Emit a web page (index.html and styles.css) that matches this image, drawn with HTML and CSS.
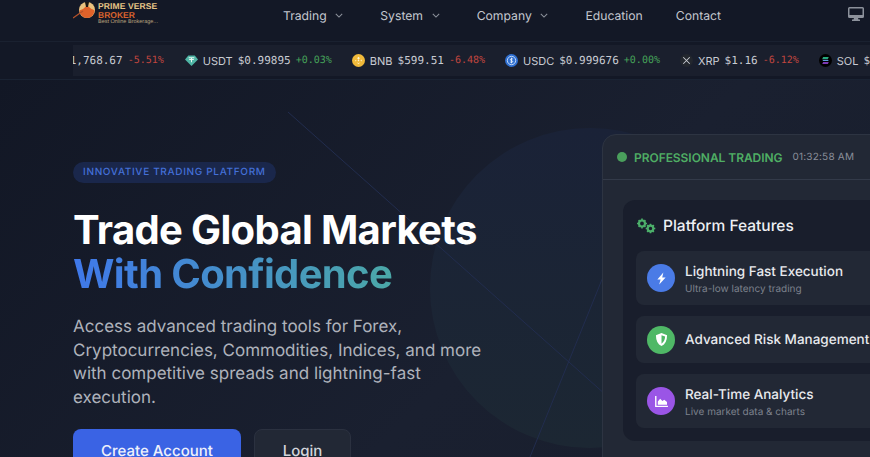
FILE: index.html
```html
<!DOCTYPE html>
<html lang="en">
<head>
<meta charset="utf-8">
<title>Prime Verse Broker</title>
<link rel="stylesheet" href="styles.css">
</head>
<body>
<header class="topbar">
  <a class="logo">
    <svg class="logo-mark" viewBox="0 0 25 26" width="25" height="26">
      <circle cx="14" cy="9" r="8" fill="#e9c27f"/>
      <path d="M6.500 9.500a7.500 7.500 0 0 0 15 0 7 7 0 0 0-3-1.500L14 4.500 10 8z" fill="#e0622a"/>
      <path d="M12 1h4l-1 5h-2z" fill="#1a1712"/>
      <path d="M0 17L10 10" stroke="#b5522a" stroke-width="1.200"/>
    </svg>
    <span class="logo-text">
      <span class="logo-prime">PRIME VERSE</span>
      <span class="logo-broker">BROKER</span>
      <span class="logo-tag">Best Online Brokerage...</span>
    </span>
  </a>
  <nav class="nav">
    <a class="nav-link caret">Trading<svg viewBox="0 0 10 6" width="8" height="5"><path d="M1 1l4 4 4-4" fill="none" stroke="currentColor" stroke-width="1.300"/></svg></a>
    <a class="nav-link caret">System<svg viewBox="0 0 10 6" width="8" height="5"><path d="M1 1l4 4 4-4" fill="none" stroke="currentColor" stroke-width="1.300"/></svg></a>
    <a class="nav-link caret">Company<svg viewBox="0 0 10 6" width="8" height="5"><path d="M1 1l4 4 4-4" fill="none" stroke="currentColor" stroke-width="1.300"/></svg></a>
    <a class="nav-link">Education</a>
    <a class="nav-link">Contact</a>
  </nav>
  <svg class="monitor" viewBox="0 0 16 14" width="16" height="14"><path fill-rule="evenodd" d="M1.500 0h13A1.500 1.500 0 0 1 16 1.500v8a1.500 1.500 0 0 1-1.500 1.500h-13A1.500 1.500 0 0 1 0 9.500v-8A1.500 1.500 0 0 1 1.500 0zM1.500 1.500v6.500h13V1.500zM6 11h4l.5 1.500H12V14H4v-1.500h1.500z" fill="#8c919b"/></svg>
</header>

<section class="ticker">
  <div class="ticker-window">
    <div class="ticker-track">
      <div class="tick tick-first"><span class="sym">BTC</span><span class="price">$71,768.67</span><span class="chg down">-5.51%</span></div>
      <div class="tick">
        <svg class="coin" viewBox="0 0 14 14"><path d="M3.500 1.500h7L14 6l-7 7-7-7z" fill="#4fb5a5"/><path d="M4 4h6M7 4v5M4.500 6h5" stroke="#e8f7f3" stroke-width="1.100" fill="none"/></svg>
        <span class="sym">USDT</span><span class="price">$0.99895</span><span class="chg up">+0.03%</span></div>
      <div class="tick">
        <svg class="coin" viewBox="0 0 14 14"><circle cx="7" cy="7" r="7" fill="#f0b93a"/><path d="M7 3l1.500 1.500L7 6 5.500 4.500zM3.500 6.500L5 7 3.500 8zM10.500 6L9 7l1.500 1zM7 6l1 1-1 1-1-1zM5 9l2 2 2-2-2 1z" fill="#fff4d0"/></svg>
        <span class="sym">BNB</span><span class="price">$599.51</span><span class="chg down">-6.48%</span></div>
      <div class="tick">
        <svg class="coin" viewBox="0 0 14 14"><circle cx="7" cy="7" r="7" fill="#2f6fd0"/><circle cx="7" cy="7" r="4.500" fill="none" stroke="#dbe8fb" stroke-width=".9"/><path d="M8.500 5.500C8 5 6 4.800 5.800 6s2.600 1 2.500 2.200S6 9 5.500 8.500M7 4v6" fill="none" stroke="#fff" stroke-width=".8"/></svg>
        <span class="sym">USDC</span><span class="price">$0.999676</span><span class="chg up">+0.00%</span></div>
      <div class="tick">
        <svg class="coin" viewBox="0 0 14 14"><circle cx="7" cy="7" r="7" fill="#23272e"/><path d="M3.500 3.500l7 7M10.500 3.500l-7 7" stroke="#c9ccd2" stroke-width="1.100"/></svg>
        <span class="sym">XRP</span><span class="price">$1.16</span><span class="chg down">-6.12%</span></div>
      <div class="tick">
        <svg class="coin" viewBox="0 0 14 14"><circle cx="7" cy="7" r="7" fill="#000"/><path d="M4.500 3.500h6L9.500 5h-6z" fill="#35e2a8"/><path d="M3.500 6.200h6l1 1.400h-6z" fill="#5f9cd8"/><path d="M4.500 9h6l-1 1.500h-6z" fill="#a64df0"/></svg>
        <span class="sym">SOL</span><span class="price">$68.20</span><span class="chg down">-7.02%</span></div>
    </div>
  </div>
</section>

<main class="hero">
  <div class="hero-bg">
    <div class="orb"></div>
    <svg class="lines" viewBox="0 0 870 377" width="870" height="377">
      <path d="M288 32L870 550M603 197L530 377" stroke="#222d4e" stroke-width="1" fill="none"/>
    </svg>
  </div>
  <div class="hero-copy">
    <span class="badge">INNOVATIVE TRADING PLATFORM</span>
    <h1 class="headline">Trade Global Markets<span class="accent">With Confidence</span></h1>
    <p class="lede">Access advanced trading tools for Forex, Cryptocurrencies, Commodities, Indices, and more with competitive spreads and lightning-fast execution.</p>
    <div class="actions">
      <a class="btn btn-primary">Create Account</a>
      <a class="btn btn-ghost">Login</a>
    </div>
  </div>
  <aside class="panel">
    <div class="panel-head">
      <span class="dot"></span>
      <span class="pro">PROFESSIONAL TRADING</span>
      <span class="clock">01:32:58 AM</span>
    </div>
    <div class="panel-body">
      <div class="features">
        <h2 class="features-title">
          <svg viewBox="0 0 20 16" width="20" height="16"><g fill="none" stroke="#4caf6a"><circle cx="6" cy="5.500" r="3" stroke-width="2.200"/><circle cx="14.500" cy="10.500" r="2.800" stroke-width="2.200"/></g><g stroke="#4caf6a" stroke-width="1.600"><path d="M6 .5v2M6 8.500v2M1 5.500h2M9 5.500h2M2.600 2.100l1.200 1.200M8.200 7.700l1.200 1.200M9.400 2.100L8.200 3.300M3.800 7.700L2.600 8.900"/><path d="M14.500 5.700v2M14.500 13.300v2M9.700 10.500h2M17.300 10.500h2M11.100 7.100l1.400 1.400M16.500 12.500l1.400 1.400M17.900 7.100l-1.400 1.400M12.500 12.500l-1.400 1.400"/></g></svg>
          Platform Features</h2>
        <div class="feature">
          <span class="ficon ficon-blue"><svg viewBox="0 0 12 14" width="11" height="13"><path d="M8 .5L1.500 8H5L3.500 13.500 10.500 6H6.800z" fill="#fff"/></svg></span>
          <div class="ftext"><div class="fname">Lightning Fast Execution</div><div class="fsub">Ultra-low latency trading</div></div>
        </div>
        <div class="feature feature-tight">
          <span class="ficon ficon-green"><svg viewBox="0 0 14 14" width="13" height="13"><path fill-rule="evenodd" d="M7 0l6 2.300C13 8 11 12 7 14 3 12 1 8 1 2.300zM7 2.500v9c2.500-1.500 3.700-4.200 3.900-7.600z" fill="#fff"/></svg></span>
          <div class="ftext"><div class="fname">Advanced Risk Management</div></div>
        </div>
        <div class="feature">
          <span class="ficon ficon-purple"><svg viewBox="0 0 14 12" width="13" height="11"><path d="M0 0h1.500v10.500H14V12H0z" fill="#fff"/><path d="M3 9.500V6l2.500-3L8 5.500 10 4l3 2.500v3z" fill="#fff"/></svg></span>
          <div class="ftext"><div class="fname">Real-Time Analytics</div><div class="fsub">Live market data &amp; charts</div></div>
        </div>
      </div>
    </div>
  </aside>
</main>
</body>
</html>
```
FILE: styles.css
```css
* { box-sizing: border-box; }
html, body { margin: 0; height: 100%; overflow: hidden; }
body {
  width: 870px;
  height: 457px;
  background: #121725;
  font-family: Inter, "Noto Sans", sans-serif;
  color: #fff;
  text-rendering: geometricPrecision;
}
a { color: inherit; text-decoration: none; }

.topbar {
  height: 42px;
  display: flex;
  align-items: flex-start;
  padding-left: 73px;
  border-bottom: 1px solid #1a2130;
  background: #131826;
}
.logo { display: flex; width: 210px; height: 27px; }
.logo-mark { flex: none; margin-top: 1px; }
.logo-text { display: flex; flex-direction: column; margin-top: 2px; font-family: "Liberation Sans", sans-serif; font-weight: 700; }
.logo-prime { font-size: 8.500px; line-height: 9px; color: #e6c587; white-space: nowrap; letter-spacing: .1px; }
.logo-broker { font-size: 8.500px; line-height: 8px; color: #d8622d; }
.logo-tag { font-size: 5.500px; line-height: 6px; color: #b9a47e; font-weight: 400; white-space: nowrap; }
.nav { display: flex; gap: 33px; height: 31px; align-items: center; }
.nav-link { display: flex; align-items: center; gap: 8.600px; font-size: 12.200px; font-weight: 400; color: #c3c7cf; white-space: nowrap; }
.caret svg { color: #8d929c; margin-right: 4px; }
.monitor { margin-left: auto; margin-top: 7px; margin-right: 6px; }

.ticker {
  height: 38px;
  padding: 3px 0 3px 73px;
  border-bottom: 1px solid #1a2333;
  background: #131826;
}
.ticker-window { height: 31px; overflow: hidden; background: #1a1f2d; }
.ticker-track { display: flex; align-items: center; height: 100%; margin-left: -43px; gap: 20px; }
.tick { display: flex; align-items: center; flex: none; white-space: nowrap; }
.tick-first { margin-right: 1px; }
.coin { width: 13px; height: 13px; margin-right: 5px; flex: none; }
.sym { font-size: 11px; color: #c8cbd2; margin-right: 5px; }
.price { font-family: "DejaVu Sans Mono", monospace; font-size: 11px; color: #c8cbd2; margin-right: 5px; }
.chg { font-family: "DejaVu Sans Mono", monospace; font-size: 10px; }
.up { color: #46a35a; }
.down { color: #c2463f; }

.hero {
  position: relative;
  height: 377px;
  display: flex;
  padding-left: 73px;
  overflow: hidden;
  background: linear-gradient(135deg, #121725 0%, #1a2030 60%, #181e2c 100%);
}
.hero-bg { position: absolute; inset: 0; }
.orb {
  position: absolute;
  left: 430px;
  top: 48px;
  width: 320px;
  height: 320px;
  border-radius: 50%;
  background: linear-gradient(180deg, #1a2237 0%, #1c2733 100%);
}
.lines { position: absolute; left: 0; top: 0; }

.hero-copy { position: relative; width: 529px; flex: none; padding-top: 79px; }
.badge {
  display: inline-block;
  height: 21px;
  padding: 0 10px;
  border-radius: 11px;
  background: #1a274b;
  color: #4470d8;
  font-size: 10px;
  font-weight: 500;
  line-height: 21px;
  letter-spacing: .67px;
}
.headline { margin: 25px 0 0; font-size: 40px; line-height: 44px; font-weight: 700; letter-spacing: -.65px; color: #fff; }
.accent {
  display: block;
  width: max-content;
  background: linear-gradient(90deg, #3f78ea, #4ba8a8);
  -webkit-background-clip: text;
  background-clip: text;
  color: transparent;
}
.lede { margin: 20px 0 0; width: 420px; font-size: 17px; line-height: 23.700px; color: #aeb2bb; }
.actions { display: flex; gap: 13px; margin-top: 18px; }
.btn { display: block; height: 44px; border-radius: 8px; font-size: 15px; line-height: 44px; text-align: center; }
.btn-primary { width: 168px; background: #3a63e4; color: #eef1fb; font-weight: 500; }
.btn-ghost { width: 97px; background: #222835; border: 1px solid #2b3140; color: #d2d5db; line-height: 42px; font-weight: 500; }

.panel {
  position: relative;
  flex: none;
  width: 420px;
  height: 340px;
  margin-top: 54px;
  border: 1px solid #2d3442;
  border-radius: 14px;
  background: #222835;
}
.panel-head {
  height: 45px;
  display: flex;
  align-items: center;
  padding-left: 14px;
  border-bottom: 1px solid #333a49;
}
.dot { width: 10px; height: 10px; border-radius: 50%; background: #4a9f5c; margin-right: 7px; }
.pro { font-size: 12px; font-weight: 600; color: #4fae64; letter-spacing: -.05px; margin-right: 10px; }
.clock { font-size: 10px; color: #8a8f9a; letter-spacing: .2px; }
.panel-body { padding: 20px 20px 0; }
.features {
  width: 380px;
  height: 241px;
  padding: 13px;
  border-radius: 12px;
  background: #191e2c;
}
.features-title { display: flex; align-items: center; gap: 7px; margin: 0 0 13px; height: 25px; font-size: 15.500px; font-weight: 500; color: #eef0f3; }
.feature {
  display: flex;
  align-items: center;
  height: 54px;
  margin-bottom: 11px;
  padding-left: 11px;
  border-radius: 8px;
  background: #222835;
}
.feature-tight { height: 47px; }
.ficon { width: 28px; height: 28px; flex: none; border-radius: 50%; display: flex; align-items: center; justify-content: center; margin-right: 10px; }
.ficon-blue { background: #4a7be6; }
.ficon-green { background: #4fb866; }
.ficon-purple { background: #9a55e6; }
.fname { font-size: 13.500px; font-weight: 500; line-height: 17px; color: #e8eaee; white-space: nowrap; }
.fsub { font-size: 10px; line-height: 14px; margin-top: 1px; color: #7c818c; white-space: nowrap; }
.ftext { padding-top: 3px; }
.feature-tight .ftext { padding-top: 1px; }
```
